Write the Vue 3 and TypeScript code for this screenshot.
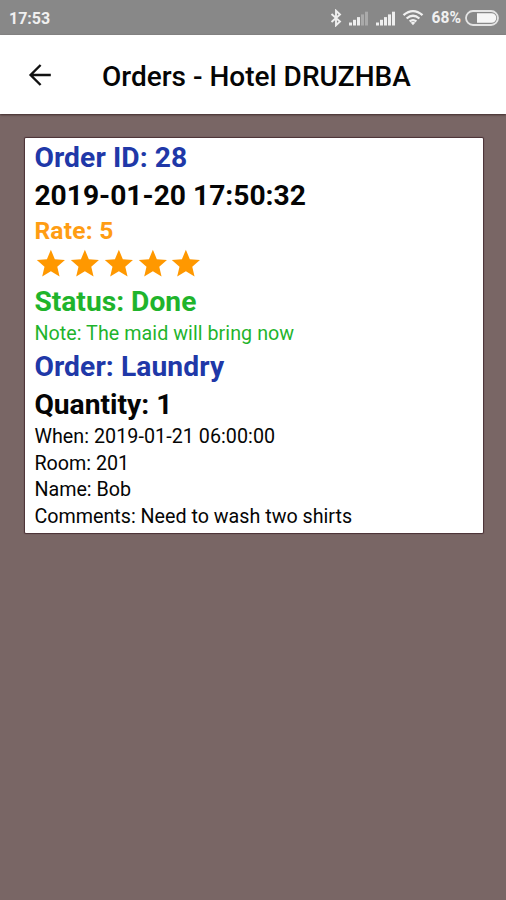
<script setup lang="ts">
interface Row {
  text: string
  kind: string
}

const head: Row[] = [
  { text: 'Order ID: 28', kind: 'large blue id' },
  { text: '2019-01-20 17:50:32', kind: 'large date' },
  { text: 'Rate: 5', kind: 'rate' },
]
const body: Row[] = [
  { text: 'Status: Done', kind: 'large green status' },
  { text: 'Note: The maid will bring now', kind: 'small green note' },
  { text: 'Order: Laundry', kind: 'large blue order' },
  { text: 'Quantity: 1', kind: 'large quantity' },
  { text: 'When: 2019-01-21 06:00:00', kind: 'small when' },
  { text: 'Room: 201', kind: 'small room' },
  { text: 'Name: Bob', kind: 'small name' },
  { text: 'Comments: Need to wash two shirts', kind: 'small comments' },
]
const bars = [0, 1, 2, 3, 4]
</script>

<template>
  <div class="screen">
    <header class="status-bar">
      <span class="clock">17:53</span>
      <div class="indicators">
        <svg class="bluetooth" width="12" height="18" viewBox="0 0 12 18">
          <path d="M1.5 5 10 12.5 6 16.3V1.7L10 5.5 1.5 13" />
        </svg>
        <svg class="signal first" width="20" height="15" viewBox="0 0 20 15">
          <rect v-for="b in bars" :key="b" :x="b * 4" :y="11.5 - b * 2.7" width="3" :height="3 + b * 2.7" :class="{ faint: b > 2 }" />
        </svg>
        <svg class="signal second" width="20" height="15" viewBox="0 0 20 15">
          <rect v-for="b in bars" :key="b" :x="b * 4" :y="11.5 - b * 2.7" width="3" :height="3 + b * 2.7" />
        </svg>
        <svg class="wifi" width="22" height="17" viewBox="0 0 22 17">
          <path d="M1.5 6.2Q11-2 20.5 6.2M4.6 9.5Q11 4 17.4 9.5M7.7 12.5Q11 9.8 14.3 12.5" />
          <path class="dot" d="M8.8 13.7Q11 12 13.2 13.7L11 16.3Z" />
        </svg>
        <span class="percent">68%</span>
        <svg class="battery" width="34" height="16" viewBox="0 0 34 16">
          <rect class="shell" x="1" y="1" width="32" height="14" rx="7" />
          <path class="charge" d="M12 3.2H26.5A4.8 4.8 0 0 1 26.5 12.8H12Z" />
        </svg>
      </div>
    </header>
    <nav class="app-bar">
      <svg class="back" width="24" height="24" viewBox="0 0 24 24">
        <path d="M22.8 12H2.8M12.6 2 2.6 12 12.6 22" />
      </svg>
      <h1>Orders - Hotel DRUZHBA</h1>
    </nav>
    <main>
      <section class="card">
        <p v-for="r in head" :key="r.text" :class="r.kind"><span>{{ r.text }}</span></p>
        <div class="stars">
          <svg v-for="n in 5" :key="n" width="33.75" height="33.75" viewBox="0 0 24 24">
            <path d="M12 17.27 18.18 21l-1.64-7.03L22 9.24l-7.19-.61L12 2 9.19 8.63 2 9.24l5.46 4.73L5.82 21z" />
          </svg>
        </div>
        <p v-for="r in body" :key="r.text" :class="r.kind"><span>{{ r.text }}</span></p>
      </section>
    </main>
  </div>
</template>

<style>
body {
  margin: 0;
}
</style>

<style scoped>
.screen {
  width: 506px;
  height: 900px;
  display: flex;
  flex-direction: column;
  overflow: hidden;
  background: #796665;
  font-family: Roboto, sans-serif;
  color: #050505;
}
.status-bar {
  height: 35px;
  flex: none;
  box-sizing: border-box;
  display: flex;
  justify-content: space-between;
  padding: 0 7px 0 9px;
  background: #888;
  color: #f0f0f0;
  font-size: 16px;
  font-weight: 700;
  line-height: 37px;
}
.indicators {
  display: flex;
  align-items: center;
}
.indicators svg {
  display: block;
}
.bluetooth path {
  fill: none;
  stroke: #eee;
  stroke-width: 1.9;
}
.bluetooth {
  margin-right: 7px;
}
.signal {
  fill: #eee;
  margin-top: 2px;
}
.first {
  margin-right: 7px;
}
.second {
  margin-right: 6px;
}
.faint {
  fill: #aaa;
}
.wifi path {
  fill: none;
  stroke: #f0f0f0;
  stroke-width: 2.3;
}
.wifi .dot {
  fill: #f0f0f0;
  stroke: none;
}
.percent {
  margin: 2px 4px 0 7.5px;
  font-size: 15.6px;
}
.shell {
  fill: none;
  stroke: #e4e4e4;
  stroke-width: 1.8;
}
.charge {
  fill: #f6f6f6;
}
.app-bar {
  height: 79px;
  flex: none;
  box-sizing: border-box;
  display: flex;
  align-items: center;
  padding: 2px 0 0 28px;
  background: #fff;
  box-shadow: 0 1px 2px #3f2b2b;
}
.back {
  margin-top: -2px;
  fill: none;
  stroke: #111;
  stroke-width: 2.4;
}
h1 {
  margin: 2px 0 0 50px;
  font-size: 28px;
  font-weight: 500;
  line-height: 38px;
  white-space: nowrap;
}
main {
  padding: 24px 23px 0 25px;
}
.card {
  box-sizing: border-box;
  height: 395px;
  padding-left: 9.4px;
  background: #fff;
  border-radius: 1px;
  box-shadow: 0 0 1px 1px #4a3035;
}
p {
  margin: 0;
  white-space: nowrap;
}
.large {
  height: 38px;
  font-size: 28.2px;
  font-weight: 700;
  line-height: 40px;
}
.rate {
  height: 33px;
  color: #ff9d13;
  font-size: 24.6px;
  font-weight: 700;
  line-height: 34px;
  letter-spacing: 0.2px;
}
.small {
  height: 26.7px;
  font-size: 19.7px;
  line-height: 28.7px;
}
.note,
.when {
  letter-spacing: 0.05px;
}
.blue {
  color: #2038a8;
  letter-spacing: 0.1px;
}
.green {
  color: #1fb42c;
}
.stars {
  height: 35.4px;
  display: flex;
  fill: #ff9800;
}
</style>
